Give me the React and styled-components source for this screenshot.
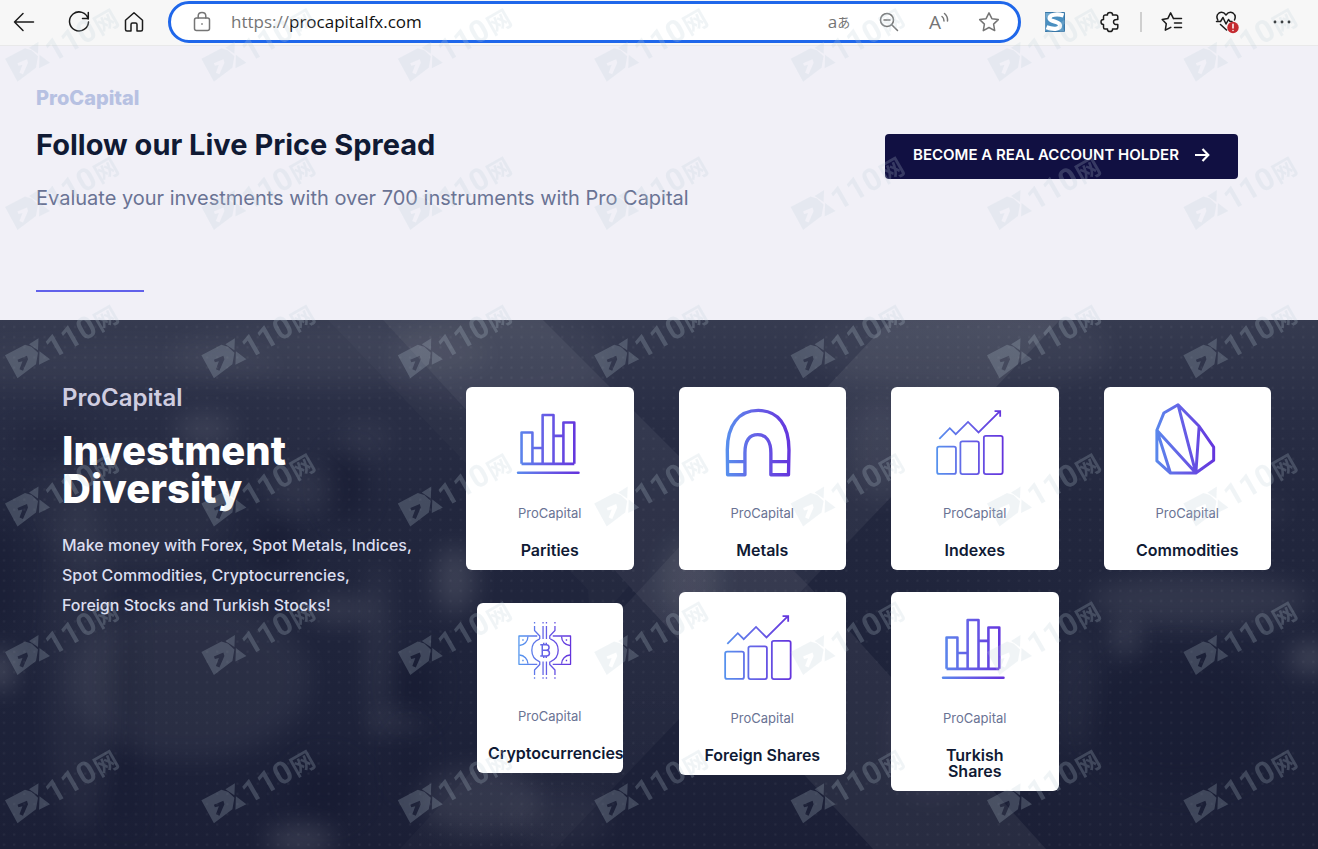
import React from 'react'
import styled, { createGlobalStyle } from 'styled-components'

const GlobalStyle = createGlobalStyle`
  * {
    box-sizing: border-box;
  }

  body {
    margin: 0;
    background: #191d33;
    font-family: Inter, "Open Sans", "Noto Sans", sans-serif;
  }

  h1, h2, h3, p {
    margin: 0;
  }
`

const Page = styled.div`
  position: relative;
  display: flex;
  flex-direction: column;
  min-height: 100vh;
  overflow: hidden;
`

/* ---------- browser bar ---------- */

const Toolbar = styled.header`
  display: flex;
  align-items: center;
  height: 46px;
  padding: 0 21px 2px 9px;
  background: #f7f7f7;
  border-bottom: 1px solid #e9e9ea;
`

const ButtonGroup = styled.div`
  display: flex;
  align-items: center;
  gap: ${({ $gap }) => $gap}px;
`

const IconButton = styled.button`
  display: flex;
  align-items: center;
  justify-content: center;
  width: 30px;
  height: 30px;
  padding: 0;
  border: 0;
  background: none;
  color: ${({ $muted }) => ($muted ? '#757575' : '#1b1b1b')};
  font: 17px/24px "Open Sans", "Noto Sans CJK JP", sans-serif;
  white-space: nowrap;
  cursor: pointer;

  svg {
    flex: none;
    fill: none;
    stroke: currentColor;
    stroke-width: 1.5;
    stroke-linecap: round;
    stroke-linejoin: round;
  }

  small {
    font-size: 13px;
  }
`

const Separator = styled.span`
  width: 2px;
  height: 20px;
  margin: 0 -10px;
  background: #cfcfcf;
`

const AddressBar = styled.div`
  flex: 1;
  display: flex;
  align-items: center;
  height: 42px;
  margin: 0 19px;
  padding: 0 14px 0 16px;
  border: 3px solid #1f67ea;
  border-radius: 21px;
  background: #fff;
`

const Url = styled.label`
  flex: 1;
  display: flex;
  align-items: center;
  margin-left: 14px;
  color: #757575;
  font: 17px/24px "Open Sans", "Noto Sans", sans-serif;
`

const UrlInput = styled.input`
  flex: 1;
  min-width: 0;
  padding: 0;
  border: 0;
  outline: 0;
  background: none;
  color: #111;
  font: inherit;
`

/* ---------- price spread ---------- */

const Spread = styled.section`
  display: flex;
  justify-content: space-between;
  align-items: flex-start;
  padding: 38px 80px 28px 36px;
  background: #f1f0f7;
`

const SpreadLabel = styled.p`
  color: #b7c1e2;
  font-size: 20px;
  font-weight: 800;
  line-height: 28px;
`

const SpreadTitle = styled.h2`
  margin-top: 13px;
  color: #101a34;
  font-size: 29px;
  font-weight: 700;
  line-height: 40px;
`

const SpreadText = styled.p`
  margin-top: 18px;
  color: #6a7394;
  font-size: 20px;
  line-height: 30px;
`

const Rule = styled.hr`
  width: 108px;
  height: 2px;
  margin: 77px 0 0;
  border: 0;
  background: #6161ea;
`

const AccountLink = styled.a`
  display: flex;
  align-items: center;
  justify-content: center;
  gap: 15px;
  width: 353px;
  height: 45px;
  margin-top: 50px;
  padding-bottom: 4px;
  border-radius: 4px;
  background: #111042;
  color: #fff;
  font-size: 15px;
  font-weight: 600;
  text-decoration: none;
`

/* ---------- investment diversity ---------- */

const Diversity = styled.section`
  position: relative;
  flex: 1;
  display: flex;
  align-items: flex-start;
  padding: 64px 47px 58px 62px;
  background: linear-gradient(#363b50, #2a2f46 16%, #22273e 35%, #1e233a 70%, #1b1f36);
`

const Backdrop = styled.svg`
  position: absolute;
  inset: 0;
  width: 100%;
  height: 100%;
`

const Intro = styled.div`
  position: relative;
  flex: none;
  width: 404px;
`

const IntroLabel = styled.p`
  color: #cfcde0;
  font-size: 24px;
  font-weight: 600;
  line-height: 28px;
`

const IntroTitle = styled.h2`
  max-width: 300px;
  margin-top: 20px;
  color: #fff;
  font-size: 40px;
  font-weight: 800;
  line-height: 38px;
`

const IntroText = styled.p`
  margin-top: 22px;
  color: #dcdff0;
  font-size: 16px;
  font-weight: 500;
  line-height: 30px;
`

const Cards = styled.div`
  position: relative;
  flex: 1;
  display: grid;
  grid-template-columns: repeat(4, minmax(0, 1fr));
  align-items: start;
  gap: 22px 45px;
  padding-top: 3px;
`

const Card = styled.article`
  margin: ${({ $inset }) => ($inset ? '11px' : '0')};
  padding: 11px 11px 12px;
  border-radius: 6px;
  background: #fff;
  text-align: center;
`

const CardIcon = styled.svg`
  display: block;
  width: 100%;
  height: ${({ $height }) => $height}px;
  fill: none;
  stroke-linejoin: round;
`

const CardLabel = styled.p`
  color: #6a7394;
  font-size: 13px;
  line-height: 22px;
`

const CardTitle = styled.h3`
  margin-top: 18px;
  color: #101a34;
  font-size: 16px;
  font-weight: 600;
  line-height: 16px;
  white-space: pre-line;
`

const Marks = styled.svg`
  position: absolute;
  inset: 0;
  width: 100%;
  height: 100%;
  fill: rgb(190, 208, 218);
  opacity: 0.22;
  pointer-events: none;
`

const BarsShape = () => (
  <g strokeWidth="2.6">
    <path d="M45 66V34.3h11V66M66.300 66V16.700h11V66M87.300 66V24.300h11V66M45 66h53.300M56 50h10.300M77.300 37.700h10" />
    <path d="M41.500 75h61" strokeLinecap="round" />
  </g>
)

const MagnetShape = () => (
  <path
    strokeWidth="3.4"
    d="M38 77L37.700 52C37.700 27 49 12 69 12S100 27 100 52L99.500 77H81.700V55C81.700 43 77 36.500 68.500 36.500S55.500 43 55.500 55V77ZM38 63.700H55.500M81.700 63.700H100"
  />
)

const GrowthShape = () => (
  <g strokeWidth="1.8">
    <rect x="35.500" y="48.700" width="19" height="27.500" rx="2" />
    <rect x="59" y="43.300" width="18.700" height="33" rx="2" />
    <rect x="82.700" y="37.700" width="19" height="38.600" rx="2" />
    <path d="M37.700 40.700L48.300 30L54.300 36L66.700 23.700L77.300 34.300L98.700 13M93.500 12.800H99.200V18.500" strokeLinejoin="miter" />
  </g>
)

const GemShape = () => (
  <path
    strokeWidth="3"
    d="M63.700 6.300L49.300 14.700L42.300 32V63L56 75.300H81.700L99.700 62.300V49L85 28ZL81.700 75.300L85 28M81.700 75.300L42.300 32L56 75.300"
  />
)

const BitcoinShape = () => (
  <g strokeWidth="1.3">
    <path d="M49 22H30.700V50.300H49M64.500 22H82.300V50.300H64.500" />
    <path d="M51.500 24.800A12.300 12.300 0 0 0 51.500 47.800M62 24.800A12.300 12.300 0 0 1 62 47.800" />
    <path d="M46.300 12V16.500L51.500 22V25M66.700 12V16.500L61.500 22V25M46.300 61V56L51.500 50.500V47.500M66.700 61V56L61.500 50.500V47.500" />
    <path d="M54.800 12V25M58.200 12V25M54.800 47.500V61M58.200 47.500V61" />
    <path d="M46.300 8v1.500M54.800 8v1.500M58.200 8v1.500M66.700 8v1.500M46.300 63.300v1.500M54.800 63.300v1.500M58.200 63.300v1.500M66.700 63.300v1.500" />
    <path d="M39.700 22.500A9 9 0 0 1 31.200 31.500M73.300 22.500A9 9 0 0 0 81.800 31.500M39.700 49.800A9 9 0 0 0 31.200 41M73.300 49.800A9 9 0 0 1 81.800 41" />
    <path d="M34 26h1.400M77.500 26h1.400M34 46.500h1.400M77.500 46.500h1.400" />
    <path strokeWidth="1.5" d="M52 30.800H58.200Q60.800 31 60.800 33.500T58.200 36.300H54M58.200 36.300Q61.200 36.500 61.200 39.200T58.200 42H52M54 30.800V42M55.500 28.800V30.800M58 28.800V30.800M55.500 42V44M58 42V44" />
  </g>
)

const cards = [
  { id: 'parities', title: 'Parities', Shape: BarsShape },
  { id: 'metals', title: 'Metals', Shape: MagnetShape },
  { id: 'indexes', title: 'Indexes', Shape: GrowthShape },
  { id: 'commodities', title: 'Commodities', Shape: GemShape },
  { id: 'crypto', title: 'Cryptocurrencies', Shape: BitcoinShape, inset: true },
  { id: 'foreign', title: 'Foreign Shares', Shape: GrowthShape },
  { id: 'turkish', title: 'Turkish\nShares', Shape: BarsShape },
]

const ProductCard = ({ id, title, Shape, inset }) => {
  const width = inset ? 123 : 147
  const height = inset ? 91 : 104

  return (
    <Card $inset={inset}>
      <CardIcon $height={height} viewBox={`0 0 ${width} ${height}`} stroke={`url(#${id})`} aria-hidden="true">
        <linearGradient id={id} gradientUnits="userSpaceOnUse" x1="32" y1="0" x2={inset ? 84 : 104} y2="0">
          <stop offset="0" stopColor="#5596ee" />
          <stop offset="0.5" stopColor="#665fe6" />
          <stop offset="1" stopColor="#6431dc" />
        </linearGradient>
        <Shape />
      </CardIcon>
      <CardLabel>ProCapital</CardLabel>
      <CardTitle>{title}</CardTitle>
    </Card>
  )
}

// soft light spots: [cx, cy, rx, ry, opacity]
const glows = [
  [90, 45, 190, 22, 0.03], [330, 35, 160, 30, 0.04], [500, 40, 110, 50, 0.04], [960, 30, 150, 40, 0.04],
  [205, 110, 30, 16, 0.09], [130, 190, 100, 60, 0.03], [300, 170, 36, 24, 0.05], [365, 120, 26, 18, 0.04],
  [190, 360, 120, 80, 0.05], [80, 340, 34, 170, 0.04], [0, 350, 14, 20, 0.17], [340, 290, 36, 12, 0.1],
  [378, 330, 10, 90, 0.07], [396, 402, 26, 8, 0.09], [455, 260, 20, 34, 0.12], [300, 520, 34, 14, 0.13],
  [480, 480, 60, 34, 0.08], [560, 500, 50, 30, 0.04], [690, 260, 30, 44, 0.08], [880, 130, 30, 50, 0.05],
  [1200, 190, 90, 10, 0.07], [1200, 280, 110, 26, 0.08], [1125, 318, 14, 16, 0.12], [1310, 338, 20, 14, 0.16],
  [1075, 370, 20, 60, 0.03], [930, 420, 40, 60, 0.04],
]

const shadows = [
  [345, 165, 20, 34, 0.6], [275, 225, 22, 26, 0.6], [125, 400, 10, 110, 0.6], [325, 470, 34, 30, 0.6],
  [415, 365, 20, 36, 0.6], [560, 120, 40, 20, 0.4], [50, 120, 40, 14, 0.3], [410, 440, 12, 30, 0.5],
  [1180, 400, 90, 70, 0.4], [0, 260, 16, 60, 0.5],
]

const Scenery = () => (
  <Backdrop viewBox="0 0 1318 529" preserveAspectRatio="xMidYMin slice" aria-hidden="true">
    <defs>
      <filter id="soft" x="-100%" y="-200%" width="300%" height="500%" colorInterpolationFilters="sRGB">
        <feGaussianBlur stdDeviation="12" />
      </filter>
      <linearGradient id="fade" x1="0" y1="0" x2="0" y2="1">
        <stop offset="0" stopColor="#fff" stopOpacity="0.07" />
        <stop offset="1" stopColor="#fff" stopOpacity="0.02" />
      </linearGradient>
      <pattern id="dots" width="10.150" height="10.150" patternUnits="userSpaceOnUse">
        <rect x="3" y="6" width="2" height="2" fill="#fff" fillOpacity="0.05" />
      </pattern>
    </defs>
    {shadows.map(([cx, cy, rx, ry, opacity]) => (
      <ellipse key={`${cx}-${cy}`} cx={cx} cy={cy} rx={rx} ry={ry} fill="#151930" opacity={opacity} filter="url(#soft)" />
    ))}
    {glows.map(([cx, cy, rx, ry, opacity]) => (
      <ellipse key={`${cx}-${cy}`} cx={cx} cy={cy} rx={rx} ry={ry} fill="#fff" opacity={opacity} filter="url(#soft)" />
    ))}
    <path d="M383 0H543L809 266L1046 529H873L629 266Z" fill="#fff" fillOpacity="0.06" />
    <path d="M328 0H383L629 266L590 310L588 270Z" fill="#fff" fillOpacity="0.02" />
    <path d="M890 0H1060L555 529H400L830 64Z" fill="url(#fade)" />
    <rect width="100%" height="100%" fill="url(#dots)" />
  </Backdrop>
)

const Watermark = () => (
  <Marks aria-hidden="true">
    {[0, 1, 2, 3, 4, 5].map(row =>
      [0, 1, 2, 3, 4, 5, 6].map(col => (
        <g key={`${row}-${col}`} transform={`translate(${col * 196.4} ${22.7 + row * 148.3})`}>
          <path fillRule="evenodd" d="M5 36L25 25.500L31.500 27.500L38 33.500L36 45L17.500 59ZM17.500 40.500L18.500 43L22.500 42L19.500 50L23 51.500L28 40L27 36.500Z" />
          <path d="M29 25L38.500 19L38 31ZM39.500 32L50 40L39 45.500Z" />
          <text transform="translate(53 40) rotate(-30)" fontFamily="Roboto, sans-serif" fontSize="31" fontWeight="700">
            110<tspan dx="1" fontFamily="Noto Sans CJK SC, sans-serif" fontSize="24">网</tspan>
          </text>
        </g>
      ))
    )}
  </Marks>
)

const App = () => (
  <Page>
    <GlobalStyle />
    <Toolbar>
      <ButtonGroup $gap={25}>
        <IconButton aria-label="Back">
          <svg width="22" height="22" viewBox="0 0 22 22"><path d="M20.500 11H1.500M10 2.500L1.500 11L10 19.500" /></svg>
        </IconButton>
        <IconButton aria-label="Refresh">
          <svg width="22" height="22" viewBox="0 0 22 22"><path d="M20.200 8A9.500 9.500 0 1 0 20.500 11M20.300 1.500V7.500H14.500" /></svg>
        </IconButton>
        <IconButton aria-label="Home">
          <svg width="22" height="22" viewBox="0 0 22 22"><path d="M2.500 9.200L11 1.800L19.500 9.200V18.500Q19.500 20 18 20H14V13.500Q14 12 12.500 12H9.500Q8 12 8 13.500V20H4Q2.500 20 2.500 18.500Z" /></svg>
        </IconButton>
      </ButtonGroup>
      <AddressBar>
        <IconButton $muted aria-label="Site information">
          <svg width="18" height="22" viewBox="0 0 18 22">
            <rect x="1.500" y="7" width="15" height="12.500" rx="2" />
            <path d="M5.200 7V5Q5.200 1.500 9 1.500T12.800 5V7M9 12.800V13.200" />
          </svg>
        </IconButton>
        <Url>
          https://
          <UrlInput defaultValue="procapitalfx.com" aria-label="Address" />
        </Url>
        <ButtonGroup $gap={20}>
          <IconButton $muted aria-label="Translate">a<small>あ</small></IconButton>
          <IconButton $muted aria-label="Zoom out">
            <svg width="20" height="20" viewBox="0 0 20 20"><circle cx="8" cy="8" r="6.500" /><path d="M13 13L18.500 18.500M5 8H11" /></svg>
          </IconButton>
          <IconButton $muted aria-label="Read aloud">
            <svg width="22" height="30" viewBox="0 0 22 30">
              <text x="1" y="22" fill="currentColor" stroke="none" fontFamily="Open Sans, sans-serif" fontSize="19">A</text>
              <path d="M14 9.500Q16 11 16 14M16.500 6.500Q20 9.500 19.500 14" />
            </svg>
          </IconButton>
          <IconButton $muted aria-label="Add to favourites">
            <svg width="22" height="22" viewBox="0 0 22 22"><path d="M11 1.800L13.900 7.700L20.300 8.600L15.600 13.100L16.700 19.600L11 16.500L5.300 19.600L6.400 13.100L1.700 8.600L8.100 7.700Z" /></svg>
          </IconButton>
        </ButtonGroup>
      </AddressBar>
      <ButtonGroup $gap={25}>
        <IconButton aria-label="S extension">
          <svg width="20" height="20" viewBox="0 0 20 20">
            <rect x="0.500" y="0.500" width="19" height="19" fill="#4a8fc0" stroke="#3a78a8" strokeWidth="1" />
            <path d="M1 1H19V3Q11 0.500 5 2.500Q1 4.500 1 8Z" fill="#71abd2" stroke="none" />
            <path d="M18.500 3.500C12 1.500 4.500 2.500 4.500 6.200S15 9.300 15 13.500S7.500 17.500 1.500 15.200" stroke="#fff" strokeWidth="4.200" strokeLinecap="butt" />
          </svg>
        </IconButton>
        <IconButton aria-label="Extensions">
          <svg width="20" height="22" viewBox="0 0 20 22"><path d="M7.500 4Q7.200 1.500 10 1.500T12.500 4H16Q17.800 4 17.800 5.800V8.600Q13.500 8.200 13.500 11T17.800 13.500V16.200Q17.800 18 16 18H12.500Q12.800 20.500 10 20.500T7.500 18H5Q3.500 18 3.500 16.200V13.500Q1 13.500 1 11T3.500 8.600V5.800Q3.500 4 5 4Z" /></svg>
        </IconButton>
        <Separator />
        <IconButton aria-label="Favourites">
          <svg width="22" height="22" viewBox="0 0 22 22"><path d="M12.500 7.600L9.600 1.800L6.800 7.600L1.200 8.500L5.300 12.700L4.300 19.200L9.800 16.300M12.500 7.600H20.500M13.500 12H20.500M13.500 16.500H20.500" /></svg>
        </IconButton>
        <IconButton aria-label="Browser essentials">
          <svg width="24" height="24" viewBox="0 0 24 24">
            <path d="M2.800 10Q0.500 5.500 4 3Q8 1 11 5Q14 1 18 3Q21.500 5.500 19.500 10M1.500 11.500H5.500L8 7.500L11 14L13.500 9.500L15 11.500H17M5.500 14.500L11.500 20" />
            <circle cx="18" cy="17.500" r="5.700" fill="#c42b30" stroke="none" />
            <path d="M18 14.300V18M18 20.500V20.600" stroke="#fff" />
          </svg>
        </IconButton>
        <IconButton aria-label="Settings and more">
          <svg width="18" height="4" viewBox="0 0 18 4"><path d="M2 2H2.010M9 2H9.010M16 2H16.010" strokeWidth="2.800" /></svg>
        </IconButton>
      </ButtonGroup>
    </Toolbar>

    <Spread>
      <div>
        <SpreadLabel>ProCapital</SpreadLabel>
        <SpreadTitle>Follow our Live Price Spread</SpreadTitle>
        <SpreadText>Evaluate your investments with over 700 instruments with Pro Capital</SpreadText>
        <Rule />
      </div>
      <AccountLink href="#account">
        BECOME A REAL ACCOUNT HOLDER
        <svg width="16" height="16" viewBox="0 0 16 16" fill="none" stroke="#fff" strokeWidth="2.200" aria-hidden="true">
          <path d="M1 8H14M8.500 2L14.300 8L8.500 14" />
        </svg>
      </AccountLink>
    </Spread>

    <Diversity>
      <Scenery />
      <Intro>
        <IntroLabel>ProCapital</IntroLabel>
        <IntroTitle>Investment Diversity</IntroTitle>
        <IntroText>
          Make money with Forex, Spot Metals, Indices,<br />
          Spot Commodities, Cryptocurrencies,<br />
          Foreign Stocks and Turkish Stocks!
        </IntroText>
      </Intro>
      <Cards>
        {cards.map(card => (
          <ProductCard key={card.id} {...card} />
        ))}
      </Cards>
    </Diversity>
    <Watermark />
  </Page>
)

export default App
